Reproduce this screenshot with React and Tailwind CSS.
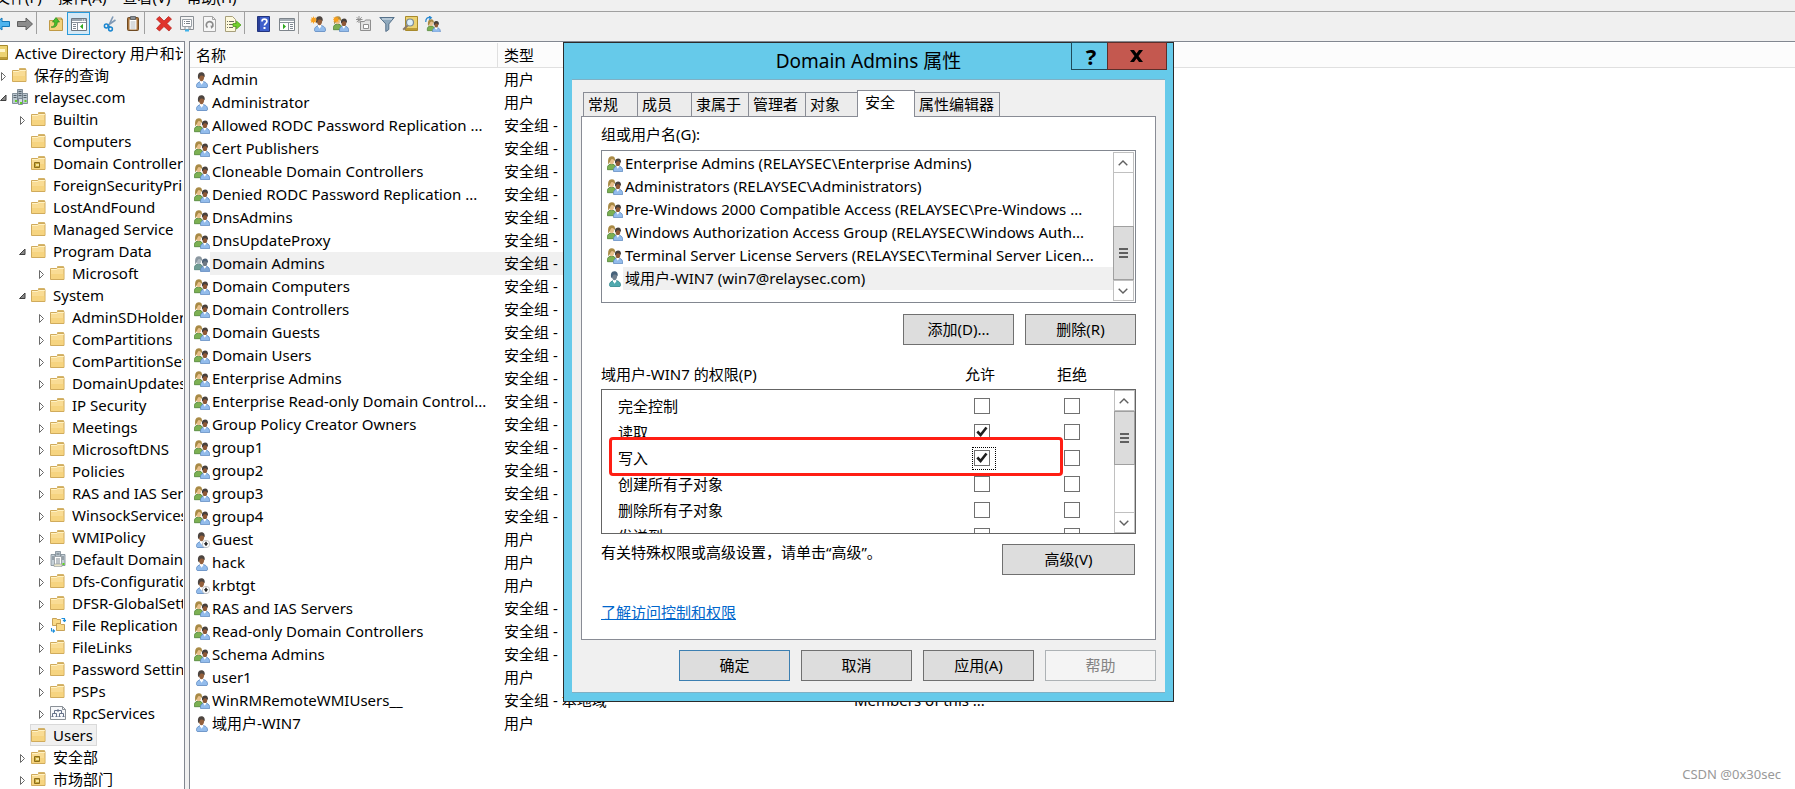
import { useState } from 'react'

const treeItems = [
  { level: 1, arrow: 'closed', icon: 'folder', name: '保存的查询' },
  { level: 1, arrow: 'open', icon: 'domain', name: 'relaysec.com' },
  { level: 2, arrow: 'closed', icon: 'folder', name: 'Builtin' },
  { level: 2, icon: 'folder', name: 'Computers' },
  { level: 2, icon: 'ou', name: 'Domain Controllers' },
  { level: 2, icon: 'folder', name: 'ForeignSecurityPrincipals' },
  { level: 2, icon: 'folder', name: 'LostAndFound' },
  { level: 2, icon: 'folder', name: 'Managed Service' },
  { level: 2, arrow: 'open', icon: 'folder', name: 'Program Data' },
  { level: 3, arrow: 'closed', icon: 'folder', name: 'Microsoft' },
  { level: 2, arrow: 'open', icon: 'folder', name: 'System' },
  { level: 3, arrow: 'closed', icon: 'folder', name: 'AdminSDHolder' },
  { level: 3, arrow: 'closed', icon: 'folder', name: 'ComPartitions' },
  { level: 3, arrow: 'closed', icon: 'folder', name: 'ComPartitionSets' },
  { level: 3, arrow: 'closed', icon: 'folder', name: 'DomainUpdates' },
  { level: 3, arrow: 'closed', icon: 'folder', name: 'IP Security' },
  { level: 3, arrow: 'closed', icon: 'folder', name: 'Meetings' },
  { level: 3, arrow: 'closed', icon: 'folder', name: 'MicrosoftDNS' },
  { level: 3, arrow: 'closed', icon: 'folder', name: 'Policies' },
  { level: 3, arrow: 'closed', icon: 'folder', name: 'RAS and IAS Servers' },
  { level: 3, arrow: 'closed', icon: 'folder', name: 'WinsockServices' },
  { level: 3, arrow: 'closed', icon: 'folder', name: 'WMIPolicy' },
  { level: 3, arrow: 'closed', icon: 'policy', name: 'Default Domain' },
  { level: 3, arrow: 'closed', icon: 'folder', name: 'Dfs-Configuration' },
  { level: 3, arrow: 'closed', icon: 'folder', name: 'DFSR-GlobalSettings' },
  { level: 3, arrow: 'closed', icon: 'replication', name: 'File Replication' },
  { level: 3, arrow: 'closed', icon: 'folder', name: 'FileLinks' },
  { level: 3, arrow: 'closed', icon: 'folder', name: 'Password Settings' },
  { level: 3, arrow: 'closed', icon: 'folder', name: 'PSPs' },
  { level: 3, arrow: 'closed', icon: 'rpc', name: 'RpcServices' },
  { level: 2, icon: 'folder', name: 'Users', selected: true },
  { level: 2, arrow: 'closed', icon: 'ou', name: '安全部' },
  { level: 2, arrow: 'closed', icon: 'ou', name: '市场部门' },
]

const objects = [
  { kind: 'user', name: 'Admin' },
  { kind: 'user', name: 'Administrator' },
  { kind: 'group', name: 'Allowed RODC Password Replication ...' },
  { kind: 'group', name: 'Cert Publishers' },
  { kind: 'group', name: 'Cloneable Domain Controllers' },
  { kind: 'group', name: 'Denied RODC Password Replication ...' },
  { kind: 'group', name: 'DnsAdmins' },
  { kind: 'group', name: 'DnsUpdateProxy' },
  { kind: 'group', name: 'Domain Admins', selected: true },
  { kind: 'group', name: 'Domain Computers' },
  { kind: 'group', name: 'Domain Controllers' },
  { kind: 'group', name: 'Domain Guests' },
  { kind: 'group', name: 'Domain Users' },
  { kind: 'group', name: 'Enterprise Admins' },
  { kind: 'group', name: 'Enterprise Read-only Domain Control...' },
  { kind: 'group', name: 'Group Policy Creator Owners' },
  { kind: 'group', name: 'group1' },
  { kind: 'group', name: 'group2' },
  { kind: 'group', name: 'group3' },
  { kind: 'group', name: 'group4' },
  { kind: 'disabled', name: 'Guest' },
  { kind: 'user', name: 'hack' },
  { kind: 'disabled', name: 'krbtgt' },
  { kind: 'group', name: 'RAS and IAS Servers' },
  { kind: 'group', name: 'Read-only Domain Controllers' },
  { kind: 'group', name: 'Schema Admins' },
  { kind: 'user', name: 'user1' },
  { kind: 'group', name: 'WinRMRemoteWMIUsers__', type: '安全组 - 本地域', description: 'Members of this ...' },
  { kind: 'user', name: '域用户-WIN7' },
]

const principals = [
  { kind: 'group', name: 'Enterprise Admins (RELAYSEC\\Enterprise Admins)' },
  { kind: 'group', name: 'Administrators (RELAYSEC\\Administrators)' },
  { kind: 'group', name: 'Pre-Windows 2000 Compatible Access (RELAYSEC\\Pre-Windows ...' },
  { kind: 'group', name: 'Windows Authorization Access Group (RELAYSEC\\Windows Auth...' },
  { kind: 'group', name: 'Terminal Server License Servers (RELAYSEC\\Terminal Server Licen...' },
  { kind: 'user', name: '域用户-WIN7 (win7@relaysec.com)', selected: true },
]

const initialPermissions = [
  { name: '完全控制', allow: false, deny: false },
  { name: '读取', allow: true, deny: false },
  { name: '写入', allow: true, deny: false, focused: true },
  { name: '创建所有子对象', allow: false, deny: false },
  { name: '删除所有子对象', allow: false, deny: false },
  { name: '发送到', allow: false, deny: false },
]

function Icon({ children, size = 16 }) {
  return (
    <svg className="shrink-0" width={size} height={size} viewBox="0 0 16 16" fill="none" aria-hidden="true">
      {children}
    </svg>
  )
}

function Person({ hair, face, shirt, edge }) {
  return (
    <>
      <path d="M3.200 15.500c-1-.6-1-3 .2-4.200 1-1 2.300-1.400 3-1.800h2.800c1.600.4 3 1 3.700 2.200.8 1.400.8 3.300 0 3.800z" fill={shirt} stroke={edge} strokeWidth=".8" />
      <path d="M6 8.500h3.200v2L7.600 12.700 6 10.300z" fill="#fff" />
      <path d="M4.700 4.500C4.700 2.500 6 1.500 7.500 1.500s2.800 1.200 2.700 3.200C10.100 7 9.100 9.300 7.500 9.300 6 9.300 4.700 7 4.700 4.500z" fill={face} />
      <path d="M4.300 7.200C3.300 3 4.200.3 7.200.2c2.600 0 4 1.500 3.500 5-.9-1.200-2-1.800-4-1.700-1 .7-1 2.200-2.400 3.700z" fill={hair} />
    </>
  )
}

function UserIcon({ selected }) {
  return (
    <Icon>
      {selected ? (
        <Person hair="#46617a" face="#71808f" shirt="#4fa9ae" edge="#2f858b" />
      ) : (
        <Person hair="#4d4540" face="#94603c" shirt="#93bcec" edge="#5c88bf" />
      )}
    </Icon>
  )
}

function DisabledUserIcon() {
  return (
    <Icon>
      <Person hair="#4d4540" face="#94603c" shirt="#93bcec" edge="#5c88bf" />
      <circle cx="12" cy="12" r="3.700" fill="#fff" stroke="#b0b0b0" strokeWidth=".7" />
      <path d="M11.200 9.700h1.600v1.600h1.500L12 14.300l-2.300-3h1.500z" fill="#222" />
    </Icon>
  )
}

function GroupPeople({ selected }) {
  return (
    <>
      <path d="M.4 13.700c-.4-2.800.4-4.700 2.600-5.400h3c2 .5 3 2 3 5.400z" fill={selected ? '#6f9d94' : '#7cb052'} stroke={selected ? '#4f8078' : '#4c8236'} strokeWidth=".8" />
      <ellipse cx="4.700" cy="5" rx="2.300" ry="3.300" fill={selected ? '#aeb9c0' : '#e8c08c'} />
      <path d="M1.300 8.300C.6 3 1.600.4 4.800.3c2.600 0 3.700 1.900 3.200 5-.8-1.400-1.700-2.200-3-2.400C3.200 3.400 3.300 6.500 1.300 8.300z" fill={selected ? '#8b98a1' : '#a98a45'} />
      <path d="M6.600 15.600c-.5-2.600.4-4.600 2.600-5.400h3.200c2.500.6 3.500 2.600 3.300 5.400z" fill={selected ? '#7ea6d6' : '#93bcec'} stroke="#5c88bf" strokeWidth=".8" />
      <path d="M9.500 9.500h2.600v1.300l-1.300 1.900-1.300-1.900z" fill="#fff" />
      <ellipse cx="10.900" cy="6.900" rx="2.300" ry="3.200" fill={selected ? '#6e7884' : '#8e5836'} />
      <path d="M8.100 7.600C7.500 4.200 8.400 2.500 11 2.400c2.400 0 3.400 1.700 2.900 4.800-.9-1.600-2-2.100-3.600-2-1 .7-1 1.500-2.200 2.400z" fill={selected ? '#4d6177' : '#463f3b'} />
    </>
  )
}

function GroupIcon({ selected }) {
  return (
    <Icon>
      <GroupPeople selected={selected} />
    </Icon>
  )
}

function ObjectIcon({ kind, selected }) {
  if (kind === 'group') return <GroupIcon selected={selected} />
  if (kind === 'disabled') return <DisabledUserIcon />
  return <UserIcon selected={selected} />
}

function FolderShape() {
  return (
    <>
      <path d="M7.500 3.500V1.500h6v4z" fill="#fbe6a6" stroke="#c9a550" strokeWidth=".8" />
      <rect x="10" y="2" width="3" height="1" fill="#4a9be0" />
      <path d="M.5 14.500v-11h6l1-1h6.500v12z" fill="#f9dc94" stroke="#d0ab5c" />
      <path d="M1 4.500h5.800l1-1h6" stroke="#fff2c4" />
      <path d="M1 9h13v5H1z" fill="#f3cb6c" opacity=".5" />
    </>
  )
}

function TreeIcon({ name }) {
  if (name === 'domain') {
    return (
      <Icon>
        <path d="M5.500.5h5v11h-5z" fill="#a9b6c0" stroke="#6c7a85" strokeWidth=".8" />
        <path d="M.5 4.500h5v10h-5z" fill="#bcc8d0" stroke="#6c7a85" strokeWidth=".8" />
        <path d="M10.500 4.500h5v10h-5z" fill="#bcc8d0" stroke="#6c7a85" strokeWidth=".8" />
        <path d="M6.500 2.500h3M6.500 4.500h3M1.500 6.500h3M1.500 8.500h3M11.500 6.500h3M11.500 8.500h3M6.500 6.500h3" stroke="#56636d" />
        <path d="M6.500 9.500h4v6h-4z" fill="#d3dbe0" stroke="#6c7a85" strokeWidth=".8" />
        <rect x="3" y="11" width="2" height="2" fill="#5fd420" />
        <rect x="12.500" y="11" width="2" height="2" fill="#5fd420" />
        <rect x="8" y="13" width="2" height="2" fill="#5fd420" />
      </Icon>
    )
  }
  if (name === 'policy') {
    return (
      <Icon>
        <path d="M5.500.5h5v7h-5z" fill="#b8c4cc" stroke="#7b8993" strokeWidth=".8" />
        <path d="M1 3.500h4v11H1zM11 3.500h4v11h-4z" fill="#c5d0d7" stroke="#7b8993" strokeWidth=".8" />
        <path d="M2 6h2M2 8h2M12 6h2M12 8h2M6.500 3h3" stroke="#64717b" />
        <path d="M4.500 5.500h7v9h-7z" fill="#fff" stroke="#8f989e" strokeWidth=".8" />
        <path d="M6 8h4M6 10h4M6 12h4" stroke="#7c8790" />
        <path d="M4 13h8v2.500H4z" fill="#e9e4c8" stroke="#8f989e" strokeWidth=".6" />
        <rect x="12.500" y="12" width="2" height="2" fill="#5fd420" />
      </Icon>
    )
  }
  if (name === 'ou') {
    return (
      <Icon>
        <FolderShape />
        <path d="M3.500 7.500h5v5h-5z" fill="#c9a93c" stroke="#8a6d1c" />
        <path d="M5 9h3v2H5z" fill="#f5e39b" />
      </Icon>
    )
  }
  if (name === 'replication') {
    return (
      <Icon>
        <path d="M2.500 8.500v-7h4l.7 1h3.300v6z" fill="#f9d987" stroke="#b98f3c" strokeWidth=".8" />
        <path d="M6.500 13.500v-7h4l.7 1h3.300v6z" fill="#f9d987" stroke="#b98f3c" strokeWidth=".8" />
        <path d="M11.500 1.500h3v3M13 3l1.500 1.500L16 3M1.500 11v3h3M3 12.500L4.500 14 3 15.500" stroke="#1e8fdc" strokeWidth="1.100" />
      </Icon>
    )
  }
  if (name === 'rpc') {
    return (
      <Icon>
        <path d="M.5 1.500h12l3 3v10H.5z" fill="#f7f8fa" stroke="#8a9097" />
        <path d="M12.500 1.500v3h3" stroke="#8a9097" />
        <path d="M2.500 11v-2.500h4V11M4.500 8.500v-3h3M9.500 11v-2.500h4V11M11.500 8.500v-3h-3" stroke="#66728a" />
        <path d="M7 5h2v1H7zM1.500 11.500h2M5.500 11.500h2M8.500 11.500h2M12.500 11.500h2" fill="#66728a" stroke="#66728a" />
      </Icon>
    )
  }
  return (
    <Icon>
      <FolderShape />
    </Icon>
  )
}

function TreeArrow({ state }) {
  return (
    <svg className="shrink-0" width="11" height="14" viewBox="0 0 11 14" fill="none" aria-hidden="true">
      {state === 'closed' && <path d="M1.500 4.500v8l4-4z" stroke="#6a6a6a" />}
      {state === 'open' && <path d="M.5 10.500H6V5z" fill="#8a8a8a" stroke="#404040" />}
    </svg>
  )
}

const levelPadding = { 1: 'pl-0', 2: 'pl-[19px]', 3: 'pl-[38px]' }

function TreeRow({ item }) {
  return (
    <li className={`flex h-[22px] items-center ${levelPadding[item.level]}`}>
      <TreeArrow state={item.arrow} />
      <div
        className={`flex h-[22px] items-center border pr-[3px] ${
          item.selected ? 'border-[#d9d9d9] bg-[#f0f0f0]' : 'border-transparent'
        }`}
      >
        <TreeIcon name={item.icon} />
        <span className="pl-[6px] leading-5">{item.name}</span>
      </div>
    </li>
  )
}

function ToolButton({ label, active, className = '', children }) {
  return (
    <button
      type="button"
      aria-label={label}
      className={`flex h-[23px] w-[23px] shrink-0 items-center justify-center ${
        active ? 'border border-[#2a9bdb] bg-[#d5e9f6]' : ''
      } ${className}`}
    >
      {children}
    </button>
  )
}

function Separator() {
  return <div className="mr-[7px] h-[22px] w-px shrink-0 bg-[#a0a0a0]" />
}

function Toolbar() {
  return (
    <div className="flex h-[30px] shrink-0 items-start border-t border-[#a0a0a0]">
      <ToolButton label="后退" className="-ml-[10px]">
        <Icon>
          <path d="M.5 8L8 2v3.500h7.500v5H8V14z" fill="#4fb4ee" stroke="#1478b8" />
        </Icon>
      </ToolButton>
      <ToolButton label="前进">
        <Icon>
          <path d="M15.500 8L9 2v3.500H.5v5H9V14z" fill="#8c8c8c" stroke="#5f5f5f" />
        </Icon>
      </ToolButton>
      <Separator />
      <ToolButton label="上一级">
        <Icon>
          <path d="M1.500 14.500v-10h5l1-1.500h7v11.500z" fill="#f5d27c" stroke="#c09a45" />
          <path d="M8.500 2h5v2" stroke="#c09a45" />
          <path d="M3 11c3 0 4-2 3.700-5H4.500L8 1.500 11.500 6H9.300c0 4-2.300 6.300-6.300 5z" fill="#4bbf2d" stroke="#2b8a17" strokeWidth=".7" />
        </Icon>
      </ToolButton>
      <ToolButton label="显示/隐藏控制台树" active>
        <Icon>
          <path d="M.5 2.500h15v12H.5z" fill="#fff" stroke="#6f7780" />
          <path d="M1 3h14v2H1z" fill="#9aa3ad" />
          <path d="M11 4h1M13 4h1" stroke="#fff" />
          <path d="M1 6.500h14M6.500 7v7" stroke="#8a929b" />
          <path d="M2 8.500h3M2 10.500h3M2 12.500h3" stroke="#7d8791" />
          <path d="M12 7.800v5.400L9 10.500z" fill="#2fa81f" />
        </Icon>
      </ToolButton>
      <div className="w-2 shrink-0" />
      <ToolButton label="剪切">
        <Icon>
          <path d="M11 .5L6.500 10M13.500 4L5.500 9.500" stroke="#7f99b5" strokeWidth="1.600" />
          <circle cx="4.300" cy="10" r="1.900" stroke="#1a86d0" strokeWidth="1.500" />
          <circle cx="8.500" cy="13" r="1.900" stroke="#1a86d0" strokeWidth="1.500" />
          <path d="M6 9.500l2.300 2" stroke="#1a86d0" strokeWidth="1.500" />
        </Icon>
      </ToolButton>
      <ToolButton label="粘贴">
        <Icon>
          <rect x="2.500" y="1.500" width="11" height="13" rx="1" fill="#a8743d" stroke="#6f4a22" />
          <path d="M4.500 3.500h7v10h-7z" fill="#fff" />
          <path d="M5.500 6h5M5.500 8h5M5.500 10h5M5.500 12h5" stroke="#b0b6bc" />
          <path d="M5.500.5h5v3h-5z" fill="#8a9096" stroke="#565b60" strokeWidth=".8" />
        </Icon>
      </ToolButton>
      <Separator />
      <ToolButton label="删除">
        <Icon>
          <path d="M3.500.5L8 5l4.500-4.500L15.500 3 11 7.500l4.500 4.500-2.500 3L8 10.500 3.500 15l-3-2.500L5 7.500.5 3z" fill="#e0342c" stroke="#b3201a" strokeWidth=".7" />
        </Icon>
      </ToolButton>
      <ToolButton label="属性">
        <Icon>
          <path d="M1.500.5h13v13h-13z" fill="#f4f4f4" stroke="#8a8f94" />
          <path d="M3.500 3.500h9v7h-9z" fill="#fff" stroke="#9aa0a6" />
          <path d="M5 5.500h1M7 5.500h4M5 7.500h1M7 7.500h4" stroke="#7d848b" />
          <path d="M5 12h2M9 12h3" stroke="#8a8f94" />
          <path d="M6 14.500h4" stroke="#3fb3ea" strokeWidth="2" />
        </Icon>
      </ToolButton>
      <ToolButton label="刷新">
        <Icon>
          <path d="M1.500.5h9l3 3v12h-12z" fill="#f6f6f6" stroke="#a4a4a4" />
          <path d="M10.500.5v3h3" stroke="#a4a4a4" />
          <path d="M5.500 11.500a3.300 3.300 0 1 1 4.500-.3" stroke="#8b8b8b" strokeWidth="1.700" />
          <path d="M8.500 9.500l3 .5-2.300 3z" fill="#8b8b8b" />
        </Icon>
      </ToolButton>
      <ToolButton label="导出列表">
        <Icon>
          <path d="M.5.5h7l3 3v12H.5z" fill="#fdf9dc" stroke="#a79f7b" />
          <path d="M2 5.500h1M4 5.500h5M2 8.500h1M4 8.500h4M2 11.500h1M4 11.500h4" stroke="#6b6b60" />
          <path d="M8 7.500h3.500V5L16 9l-4.500 4v-2.500H8z" fill="#73cf2b" stroke="#449a12" strokeWidth=".7" />
        </Icon>
      </ToolButton>
      <Separator />
      <ToolButton label="帮助">
        <Icon>
          <path d="M1.500.5h12v15h-12z" fill="#3e5fcb" stroke="#22347e" />
          <path d="M2 1h2v14H2z" fill="#2a3f99" />
          <path d="M6 5.500c0-1.600 1-2.300 2.400-2.300s2.500.8 2.500 2.200c0 2-2.400 1.900-2.400 4.100" stroke="#fff" strokeWidth="1.700" />
          <path d="M7.500 11h2v2h-2z" fill="#fff" />
        </Icon>
      </ToolButton>
      <ToolButton label="显示/隐藏操作窗格">
        <Icon>
          <path d="M.5 2.500h15v12H.5z" fill="#fff" stroke="#7d848b" />
          <path d="M1 3h14v2H1z" fill="#a5adb5" />
          <path d="M1 6.500h14M9.500 7v7" stroke="#8a929b" />
          <path d="M11 8.500h3M11 10.500h3M11 12.500h3" stroke="#7d8791" />
          <path d="M4 7.800v5.400l3-2.700z" fill="#2fa81f" />
        </Icon>
      </ToolButton>
      <Separator />
      <ToolButton label="新建用户">
        <Icon>
          <g transform="translate(2 0)">
            <Person hair="#4d4540" face="#94603c" shirt="#93bcec" edge="#5c88bf" />
          </g>
          <path d="M3.500 0l.8 2 2-.8-.8 2 2 .8-2 .8.800 2-2-.8-.8 2-.8-2-2 .8.800-2L0 4l1.800-.8L1 1.200l1.800.8z" fill="#f8a01c" />
        </Icon>
      </ToolButton>
      <ToolButton label="新建组">
        <Icon>
          <GroupPeople />
          <path d="M3 0l.7 1.700L5.500 1 5 2.800l1.500.7L5 4.200 5.500 6l-1.800-.7L3 7l-.7-1.700L.5 6 1 4.200 0 3.500l1-.7L.5 1l1.800.7z" fill="#f8a01c" />
        </Icon>
      </ToolButton>
      <ToolButton label="新建组织单位">
        <Icon>
          <path d="M4.500 14.500v-9h4l1-1.500h5v10.500z" fill="#e3e3e3" stroke="#8f8f8f" />
          <path d="M7.500 8.500h5v4h-5z" fill="#fff" stroke="#8f8f8f" />
          <path d="M3 0v7M0 3.500h6.500M.7 1.200l5 5M5.700 1.200l-5 5" stroke="#8f8f8f" />
        </Icon>
      </ToolButton>
      <ToolButton label="筛选">
        <Icon>
          <path d="M.8 1.500h14.400L9.800 8v5.500l-3 2V8z" fill="#8fa9bd" stroke="#56718a" />
          <path d="M3 3h10" stroke="#dbe7f0" />
        </Icon>
      </ToolButton>
      <ToolButton label="查找">
        <Icon>
          <path d="M3.500.5h12v14h-12z" fill="#ecd271" stroke="#a88a2c" />
          <path d="M4 12h11v2H4z" fill="#bd9c36" />
          <circle cx="8" cy="6.500" r="3.500" fill="#dbeefa" stroke="#7b8b98" strokeWidth="1.200" />
          <path d="M5.500 9.500L1.200 13.800" stroke="#8a7a6a" strokeWidth="2" />
        </Icon>
      </ToolButton>
      <ToolButton label="添加到组">
        <Icon>
          <g transform="translate(2 3) scale(.85)">
            <GroupPeople />
          </g>
          <path d="M.8 6C.6 2.500 2.500 1 5.500 1.500M4 0l2.300 1.700L4 3.500" stroke="#2586cf" strokeWidth="1.200" />
        </Icon>
      </ToolButton>
    </div>
  )
}

function Scrollbar({ thumbAtEnd }) {
  return (
    <div className="flex w-[21px] shrink-0 flex-col border border-[#c0c0c0] bg-white">
      <button type="button" aria-label="向上滚动" className="flex h-5 shrink-0 items-center border-b border-[#c0c0c0] pl-1">
        <svg width="10" height="6" viewBox="0 0 10 6" fill="none">
          <path d="M.7 5.300L5 1l4.300 4.300" stroke="#606060" strokeWidth="1.400" />
        </svg>
      </button>
      {thumbAtEnd && <div className="flex-1" />}
      <div className="-mx-px flex h-[54px] shrink-0 flex-col items-center justify-center gap-[2px] border border-[#a0a0a0] bg-[#dcdcdc]">
        <div className="h-[2px] w-[9px] bg-[#606060]" />
        <div className="h-[2px] w-[9px] bg-[#606060]" />
        <div className="h-[2px] w-[9px] bg-[#606060]" />
      </div>
      {!thumbAtEnd && <div className="flex-1" />}
      <button type="button" aria-label="向下滚动" className="flex h-5 shrink-0 items-center border-t border-[#c0c0c0] pl-1">
        <svg width="10" height="6" viewBox="0 0 10 6" fill="none">
          <path d="M.7.7L5 5 9.300.7" stroke="#606060" strokeWidth="1.400" />
        </svg>
      </button>
    </div>
  )
}

function Checkbox({ label, checked, focused, onChange }) {
  return (
    <span className="relative block h-4 w-4">
      <input
        type="checkbox"
        aria-label={label}
        checked={checked}
        onChange={onChange}
        className="block h-4 w-4 appearance-none border border-[#707070] bg-white"
      />
      {checked && (
        <svg className="pointer-events-none absolute inset-0" width="16" height="16" viewBox="0 0 16 16" fill="none">
          <path d="M3.300 7.500L6.600 11 12.500 3.500" stroke="#1f1f1f" strokeWidth="2.600" />
        </svg>
      )}
      {focused && <span className="pointer-events-none absolute -left-[2px] -top-[3px] h-[23px] w-6 border border-dotted border-black" />}
    </span>
  )
}

function DialogButton({ children, className = 'w-[111px] border-[#707070] bg-[#dddddd]', disabled }) {
  return (
    <button
      type="button"
      disabled={disabled}
      className={`h-[31px] border text-center disabled:text-[#838383] ${className}`}
    >
      {children}
    </button>
  )
}

function Tab({ children, className, selected }) {
  return (
    <button
      type="button"
      role="tab"
      aria-selected={!!selected}
      className={`whitespace-nowrap border-t border-[#898c95] text-left ${
        selected
          ? 'z-10 -mb-px h-[27px] border-x bg-white pb-[3px] pl-[7px]'
          : 'h-6 bg-[#ececec] pl-1'
      } ${className}`}
    >
      {children}
    </button>
  )
}

function PropertiesDialog() {
  const [permissions, setPermissions] = useState(initialPermissions)

  const toggle = (index, key) => {
    setPermissions(permissions.map((p, i) => (i === index ? { ...p, [key]: !p[key] } : p)))
  }

  return (
    <div
      role="dialog"
      aria-label="Domain Admins 属性"
      className="absolute left-[563px] top-[42px] w-[611px] border border-[#2b2b2b] bg-[#66caea] px-2 pb-2"
    >
      {/* Title bar */}
      <div className="relative h-9">
        <h1 className="text-center text-[19px] leading-9">Domain Admins 属性</h1>
        <div className="absolute -right-[2px] -top-px flex">
          <button type="button" aria-label="帮助" className="h-7 w-[37px] border border-[#1f4a5a] pl-[3px] text-[22px] font-bold leading-6">
            ?
          </button>
          <button type="button" aria-label="关闭" className="-ml-px flex h-7 w-[60px] items-center justify-center border border-[#5c2f2b] bg-[#c4584f] pr-[2px]">
            <svg width="13" height="12" viewBox="0 0 13 12">
              <path d="M0 0h4l2.500 3.500L9 0h4L8.500 6l4.500 6H9L6.500 8.500 4 12H0l4.500-6z" fill="#000" />
            </svg>
          </button>
        </div>
      </div>

      <div className="border-y border-[#80b0c4] bg-[#f0f0f0] px-[9px] pb-[11px] pt-[10px]">
        <div role="tablist" className="flex items-end pl-[2px]">
          <Tab className="w-[54px] border-l">常规</Tab>
          <Tab className="w-[54px] border-l">成员</Tab>
          <Tab className="w-[57px] border-l">隶属于</Tab>
          <Tab className="w-[57px] border-l">管理者</Tab>
          <Tab className="w-[52px] border-l">对象</Tab>
          <Tab className="w-[58px]" selected>安全</Tab>
          <Tab className="w-[85px] border-r">属性编辑器</Tab>
        </div>

        <div className="border border-[#898c95] bg-white px-[19px] pb-4 pt-[6px]">
          <p className="mb-[5px] leading-[22px]">组或用户名(G):</p>
          <div className="flex h-[153px] border border-[#828790] p-px">
            <ul className="min-w-0 flex-1 overflow-hidden pl-1">
              {principals.map((p) => (
                <li key={p.name} className="flex h-[23px] items-center">
                  <ObjectIcon kind={p.kind} selected={p.selected} />
                  <span className={`flex-1 whitespace-nowrap pl-[2px] leading-[23px] ${p.selected ? 'bg-[#f0f0f0]' : ''}`}>
                    {p.name}
                  </span>
                </li>
              ))}
            </ul>
            <Scrollbar thumbAtEnd />
          </div>

          <div className="mt-[11px] flex justify-end gap-[11px]">
            <DialogButton>添加(D)...</DialogButton>
            <DialogButton>删除(R)</DialogButton>
          </div>

          <div className="mb-1 mt-[18px] flex pr-[49px] leading-[22px]">
            <span className="flex-1">域用户-WIN7 的权限(P)</span>
            <span className="w-[92px]">允许</span>
            <span className="w-[30px]">拒绝</span>
          </div>
          <div className="relative flex h-[145px] border border-[#646464]">
            <div className="min-w-0 flex-1 overflow-hidden pt-[3px]">
              <table className="w-full table-fixed border-collapse">
                <colgroup>
                  <col />
                  <col className="w-[90px]" />
                  <col className="w-[50px]" />
                </colgroup>
                <tbody>
                  {permissions.map((p, i) => (
                    <tr key={p.name} className="h-[26px]">
                      <td className="p-0 pl-4 leading-[26px]">{p.name}</td>
                      <td className="p-0">
                        <Checkbox label={`允许 ${p.name}`} checked={p.allow} focused={p.focused} onChange={() => toggle(i, 'allow')} />
                      </td>
                      <td className="p-0">
                        <Checkbox label={`拒绝 ${p.name}`} checked={p.deny} onChange={() => toggle(i, 'deny')} />
                      </td>
                    </tr>
                  ))}
                </tbody>
              </table>
            </div>
            <Scrollbar />
            {/* Highlight around the write permission */}
            <div className="pointer-events-none absolute left-[7px] top-[47px] h-[39px] w-[454px] rounded-[4px] border-3 border-[#ff1e14]" />
          </div>

          <div className="mt-2 flex items-start justify-between">
            <p className="leading-5">有关特殊权限或高级设置，请单击“高级”。</p>
            <DialogButton className="mt-[2px] mr-px w-[133px] border-[#707070] bg-[#dddddd]">高级(V)</DialogButton>
          </div>
          <a href="#permissions" className="mt-[26px] block w-fit leading-[22px] text-[#0066cc] underline">
            了解访问控制和权限
          </a>
        </div>

        <div className="mt-[10px] flex justify-end gap-[11px]">
          <DialogButton className="w-[111px] border-[#3c7fb1] bg-[#dddddd]">确定</DialogButton>
          <DialogButton>取消</DialogButton>
          <DialogButton>应用(A)</DialogButton>
          <DialogButton className="w-[111px] border-[#adb2b5] bg-[#f4f4f4]" disabled>帮助</DialogButton>
        </div>
      </div>
    </div>
  )
}

function App() {
  return (
    <div className="relative flex h-screen flex-col overflow-hidden bg-[#f0f0f0] font-['Noto_Sans','Noto_Sans_CJK_SC',sans-serif] text-[15px] text-black">
      {/* Menu */}
      <nav className="flex h-[11px] shrink-0 items-end gap-4 overflow-hidden pb-[3px] leading-[22px]">
        <button type="button" className="-ml-[5px]">文件(F)</button>
        <button type="button">操作(A)</button>
        <button type="button">查看(V)</button>
        <button type="button">帮助(H)</button>
      </nav>

      <Toolbar />

      <div className="flex min-h-0 flex-1 gap-1">
        {/* Console tree */}
        <aside className="w-[185px] shrink-0 overflow-hidden border-r border-t border-[#828790] bg-white pr-px">
          <ul className="overflow-hidden whitespace-nowrap">
            <li className="flex h-[22px] items-center">
              <span className="flex w-2 shrink-0 justify-end">
                <Icon>
                  <path d="M3.500.5h12v14h-12z" fill="#ecd271" stroke="#a88a2c" />
                  <path d="M8 4h5v3H8z" fill="#fff5c8" />
                  <path d="M4 12h11v2H4z" fill="#bd9c36" />
                </Icon>
              </span>
              <span className="pl-[7px] leading-5">Active Directory 用户和计算机</span>
            </li>
            {treeItems.map((item) => (
              <TreeRow key={item.name} item={item} />
            ))}
          </ul>
        </aside>

        {/* Object list */}
        <main className="min-w-0 flex-1 overflow-hidden border-l border-t border-[#828790] bg-white pt-px">
          <table className="w-full table-fixed border-separate border-spacing-0 whitespace-nowrap text-left">
            <colgroup>
              <col className="w-[308px]" />
              <col className="w-[350px]" />
              <col className="w-[150px]" />
              <col />
            </colgroup>
            <thead>
              <tr className="h-[25px] bg-[#fcfcfc]">
                <th className="border-b border-r border-[#e0e0e0] p-0 pl-[6px] font-normal leading-6">名称</th>
                <th className="border-b border-r border-[#e0e0e0] p-0 pl-[6px] font-normal leading-6">类型</th>
                <th className="border-b border-r border-[#e0e0e0] p-0" />
                <th className="border-b border-[#e0e0e0] p-0" />
              </tr>
            </thead>
            <tbody>
              {objects.map((o) => (
                <tr key={o.name} className="h-[23px]">
                  <td className="p-0 pl-1">
                    <div className="flex items-center">
                      <ObjectIcon kind={o.kind} selected={o.selected} />
                      <span className={`flex-1 pl-[2px] leading-[23px] ${o.selected ? 'bg-[#f0f0f0]' : ''}`}>{o.name}</span>
                    </div>
                  </td>
                  <td className={`p-0 pl-[6px] leading-[23px] ${o.selected ? 'bg-[#f0f0f0]' : ''}`}>
                    {o.type || (o.kind === 'group' ? '安全组 -' : '用户')}
                  </td>
                  <td className="p-0 pl-[6px] leading-[23px]">{o.description}</td>
                  <td className="p-0" />
                </tr>
              ))}
            </tbody>
          </table>
        </main>
      </div>

      <PropertiesDialog />

      <span className="absolute bottom-[5px] right-[14px] text-[13px] leading-5 text-[#999999]">CSDN @0x30sec</span>
    </div>
  )
}

export default App
